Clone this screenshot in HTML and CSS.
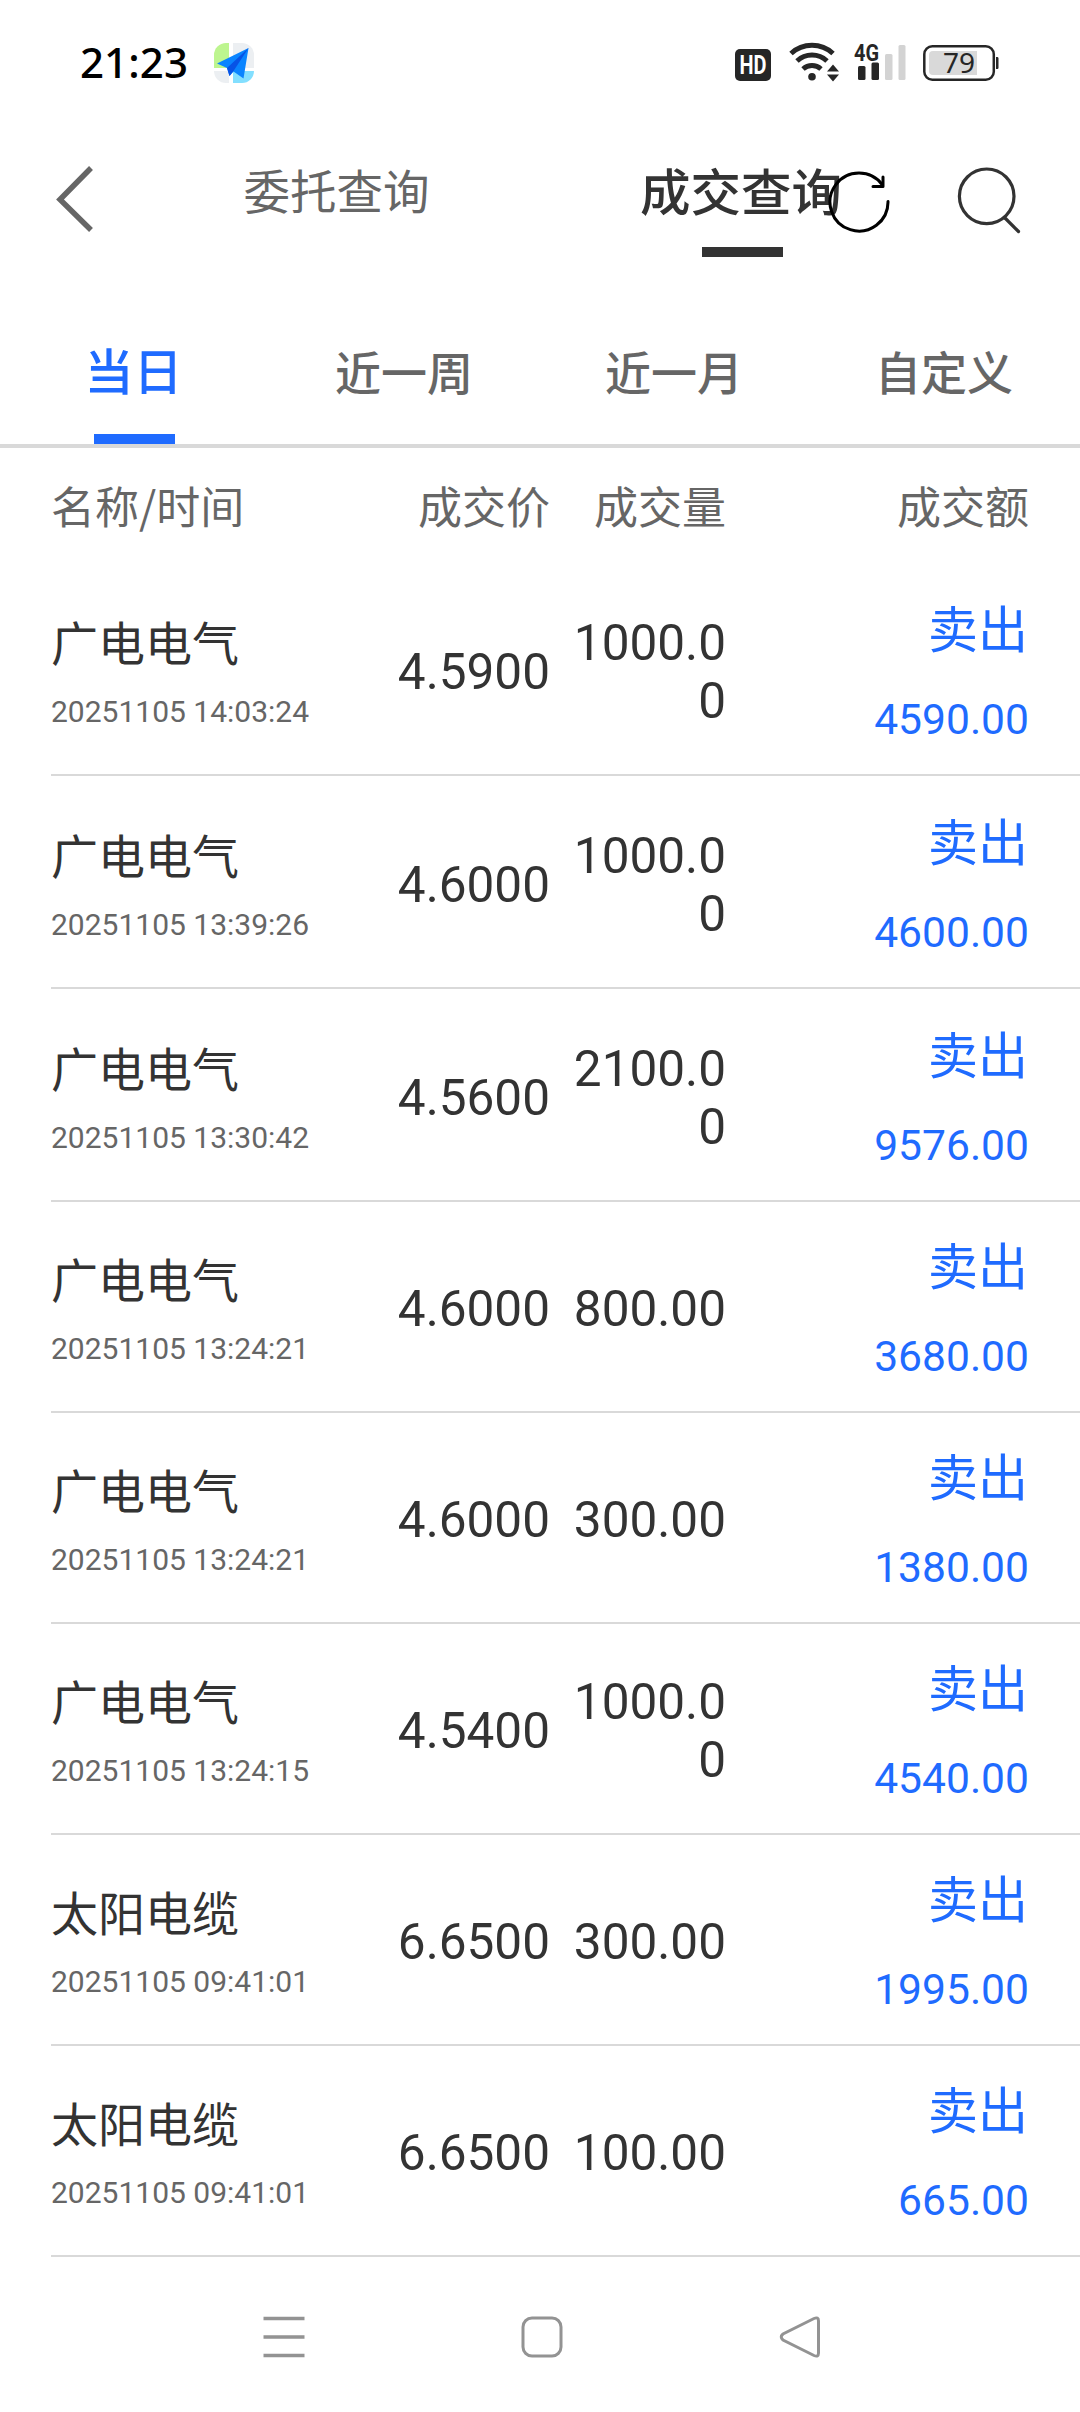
FILE: index.html
```html
<!DOCTYPE html>
<html lang="zh-CN">
<head>
<meta charset="utf-8">
<title>成交查询</title>
<link rel="stylesheet" href="styles.css">
</head>
<body>
<div class="screen">
  <div class="status-bar">
    <span class="clock">21:23</span>
    <svg class="app-icon" width="40" height="40" viewBox="0 0 40 40">
      <path d="M12 0h3v25H0V12A12 12 0 0 1 12 0z" fill="#bdf58f"/>
      <path d="M19 0h9a12 12 0 0 1 12 12v13H19z" fill="#eceff2"/>
      <path d="M0 28h15v12h-3A12 12 0 0 1 0 28z" fill="#eceff2"/>
      <path d="M19 28h21a12 12 0 0 1-12 12h-9z" fill="#83dfff"/>
      <path d="M34.500 5 3 20.500l10 4.500 2.500 8 4-4.500 10 7z" fill="#0a84ff"/>
      <path d="M34.500 5 13 25l2.500 8 4-5z" fill="#0753e6"/>
    </svg>
    <svg class="indicators" width="265" height="50" viewBox="735 36 265 50">
      <rect x="735" y="48" width="36" height="32" rx="5" fill="#262626"/>
      <text x="753" y="72.500" class="hd" text-anchor="middle" textLength="27" lengthAdjust="spacingAndGlyphs">HD</text>
      <g fill="none" stroke="#262626" stroke-width="5">
        <path d="M791 52.500a31 31 0 0 1 42 0"/>
        <path d="M797 60a22 22 0 0 1 30 0"/>
        <path d="M803 68a13.500 13.500 0 0 1 18 0"/>
      </g>
      <circle cx="812" cy="75.800" r="3.800" fill="#262626"/>
      <path d="M827 70.500h12L833 63.500zM827 73.500h12L833 80.500z" fill="#262626"/>
      <text x="854" y="59.500" class="net" textLength="25" lengthAdjust="spacingAndGlyphs">4G</text>
      <rect x="858" y="65" width="7.500" height="14" rx="1.500" fill="#262626"/>
      <rect x="871.500" y="61.500" width="7.500" height="17.500" rx="1.500" fill="#262626"/>
      <rect x="885" y="53" width="7.500" height="26" rx="1.500" fill="#d3d3d3"/>
      <rect x="898.500" y="44" width="7" height="35" rx="1.500" fill="#d3d3d3"/>
      <rect x="924.300" y="45.200" width="69.500" height="33.500" rx="8" fill="#fff" stroke="#262626" stroke-width="2.500"/>
      <path d="M933 50h44v24h-44a4 4 0 0 1-4-4V54a4 4 0 0 1 4-4z" fill="#d9d9d9"/>
      <path d="M996 56h1.500q1 0 1 1.500v9q0 1.500-1 1.500H996z" fill="#262626"/>
      <text x="959" y="71.500" class="level" text-anchor="middle">79</text>
    </svg>
  </div>

  <div class="title-bar">
    <svg class="back" width="40" height="68" viewBox="0 0 40 68"><path d="M37 3 6 34.500 37 65" fill="none" stroke="#666" stroke-width="5.500"/></svg>
    <div class="title-tab">委托查询</div>
    <div class="title-tab title-tab-active">成交查询</div>
    <svg class="refresh" width="64" height="64" viewBox="0 0 64 64">
      <g fill="none" stroke="#000" stroke-width="3" stroke-linecap="round" stroke-linejoin="round">
        <path d="M61 32.500A29 29 0 1 1 55.500 16"/>
        <path d="M56 8v9.500H46"/>
      </g>
    </svg>
    <svg class="search" width="64" height="68" viewBox="0 0 64 68">
      <g fill="none" stroke="#333" stroke-width="3.200" stroke-linecap="round">
        <circle cx="29.700" cy="29.300" r="27.300"/>
        <path d="M48 51 61.500 64.500"/>
      </g>
    </svg>
  </div>

  <div class="range-tabs">
    <div class="range range-active">当日</div>
    <div class="range">近一周</div>
    <div class="range">近一月</div>
    <div class="range">自定义</div>
  </div>

  <div class="columns heads"><span>名称/时间</span><span>成交价</span><span>成交量</span><span>成交额</span></div>

  <div class="rows">
    <div class="columns row row-tall"><div class="stock"><div class="name">广电电气</div><div class="time">20251105 14:03:24</div></div><div class="num">4.5900</div><div class="num">1000.00</div><div class="deal"><div class="side">卖出</div><div class="amount">4590.00</div></div></div>
    <div class="columns row row-tall"><div class="stock"><div class="name">广电电气</div><div class="time">20251105 13:39:26</div></div><div class="num">4.6000</div><div class="num">1000.00</div><div class="deal"><div class="side">卖出</div><div class="amount">4600.00</div></div></div>
    <div class="columns row row-tall"><div class="stock"><div class="name">广电电气</div><div class="time">20251105 13:30:42</div></div><div class="num">4.5600</div><div class="num">2100.00</div><div class="deal"><div class="side">卖出</div><div class="amount">9576.00</div></div></div>
    <div class="columns row"><div class="stock"><div class="name">广电电气</div><div class="time">20251105 13:24:21</div></div><div class="num">4.6000</div><div class="num">800.00</div><div class="deal"><div class="side">卖出</div><div class="amount">3680.00</div></div></div>
    <div class="columns row"><div class="stock"><div class="name">广电电气</div><div class="time">20251105 13:24:21</div></div><div class="num">4.6000</div><div class="num">300.00</div><div class="deal"><div class="side">卖出</div><div class="amount">1380.00</div></div></div>
    <div class="columns row"><div class="stock"><div class="name">广电电气</div><div class="time">20251105 13:24:15</div></div><div class="num">4.5400</div><div class="num">1000.00</div><div class="deal"><div class="side">卖出</div><div class="amount">4540.00</div></div></div>
    <div class="columns row"><div class="stock"><div class="name">太阳电缆</div><div class="time">20251105 09:41:01</div></div><div class="num">6.6500</div><div class="num">300.00</div><div class="deal"><div class="side">卖出</div><div class="amount">1995.00</div></div></div>
    <div class="columns row"><div class="stock"><div class="name">太阳电缆</div><div class="time">20251105 09:41:01</div></div><div class="num">6.6500</div><div class="num">100.00</div><div class="deal"><div class="side">卖出</div><div class="amount">665.00</div></div></div>
  </div>

  <div class="nav-bar">
    <svg width="42" height="42" viewBox="0 0 42 42"><path d="M.5 2.500h41M.5 21h41M.5 39.500h41" stroke="#939393" stroke-width="3.300"/></svg>
    <svg width="42" height="42" viewBox="0 0 42 42"><rect x="2" y="2" width="38" height="38" rx="9" fill="none" stroke="#939393" stroke-width="3"/></svg>
    <svg width="42" height="42" viewBox="0 0 42 42"><path d="M35 2.500Q39.500.5 39.500 5V37Q39.500 41.500 35 39.500L4 24Q.5 21 4 18z" fill="none" stroke="#939393" stroke-width="3"/></svg>
  </div>
</div>
</body>
</html>
```
FILE: styles.css
```css
* {
  box-sizing: border-box;
}

body {
  margin: 0;
  background: #fff;
  color: #333;
  font-family: "Noto Sans CJK SC", sans-serif;
}

svg {
  display: block;
  flex: none;
}

.screen {
  width: 1080px;
  height: 2412px;
  display: flex;
  flex-direction: column;
  overflow: hidden;
}

/* Status bar */
.status-bar {
  height: 124px;
  display: flex;
  align-items: center;
  padding: 0 80px;
}

.clock {
  width: 134px;
  font: 500 42px/60px "Noto Sans", sans-serif;
  letter-spacing: 0.1px;
  color: #000;
}

.app-icon {
  margin-top: 2px;
}

.indicators {
  margin-left: auto;
}

.hd {
  font: 700 25px Roboto, sans-serif;
  fill: #fff;
}

.net {
  font: 700 24px Roboto, sans-serif;
  fill: #262626;
}

.level {
  font: 400 28px "Noto Sans", sans-serif;
  fill: #262626;
}

/* Title bar */
.title-bar {
  position: relative;
  height: 196px;
  display: flex;
  align-items: flex-start;
  padding-left: 54px;
}

.back {
  margin: 41px 41px 0 0;
}

.title-tab {
  width: 405px;
  height: 133px;
  padding: 30px 2px 0 0;
  text-align: center;
  font-size: 46.5px;
  line-height: 70px;
  color: #666;
}

.title-tab-active {
  padding-right: 0;
  font-size: 50.5px;
  font-weight: 500;
  text-indent: -3px;
  color: #333;
}

.title-tab-active::after,
.range-active::after {
  content: "";
  display: block;
  width: 81px;
  height: 10px;
  background: currentColor;
}

.title-tab-active::after {
  margin: 23px auto 0;
}

.refresh {
  position: absolute;
  left: 827px;
  top: 45px;
}

.search {
  margin: 43px 0 0 12px;
}

/* Date range */
.range-tabs {
  height: 128px;
  display: grid;
  grid-template-columns: repeat(4, 270px);
  border-bottom: 4px solid #d9d9d9;
}

.range {
  padding: 20px 2px 0 0;
  text-align: center;
  font-size: 46px;
  font-weight: 500;
  line-height: 60px;
  color: #666;
}

.range-active {
  padding: 19px 0 0;
  font-size: 49px;
  text-indent: -3px;
  color: #1f6bff;
}

.range-active::after {
  margin: 35px auto 0 94px;
}

/* Table */
.columns {
  display: grid;
  grid-template-columns: 328px 171px 176px 303px;
  margin-left: 51px;
  text-align: right;
}

.heads {
  height: 115px;
  font-size: 44px;
  line-height: 115px;
  color: #666;
}

.heads span:first-child,
.stock {
  text-align: left;
}

.row {
  height: 211px;
  border-bottom: 2px solid #d9d9d9;
}

.row-tall {
  height: 213px;
  padding-top: 2px;
}

.stock {
  padding-top: 46px;
}

.name {
  font-size: 47px;
  line-height: 60px;
}

.time {
  margin-top: 21px;
  font: 30px/40px Roboto, sans-serif;
  color: #666;
}

.num {
  align-self: center;
  padding: 4px 0 0 17px;
  font: 49.5px/58px Roboto, sans-serif;
  word-break: break-all;
}

.deal {
  padding-top: 31px;
  color: #1f6bff;
}

.side {
  padding-right: 1px;
  font-size: 50px;
  line-height: 60px;
}

.amount {
  margin-top: 38px;
  font: 42.6px/50px Roboto, sans-serif;
}

/* System navigation */
.nav-bar {
  flex: 1;
  display: flex;
  justify-content: space-between;
  align-items: flex-start;
  padding: 59px 259px 0 263px;
}
```
